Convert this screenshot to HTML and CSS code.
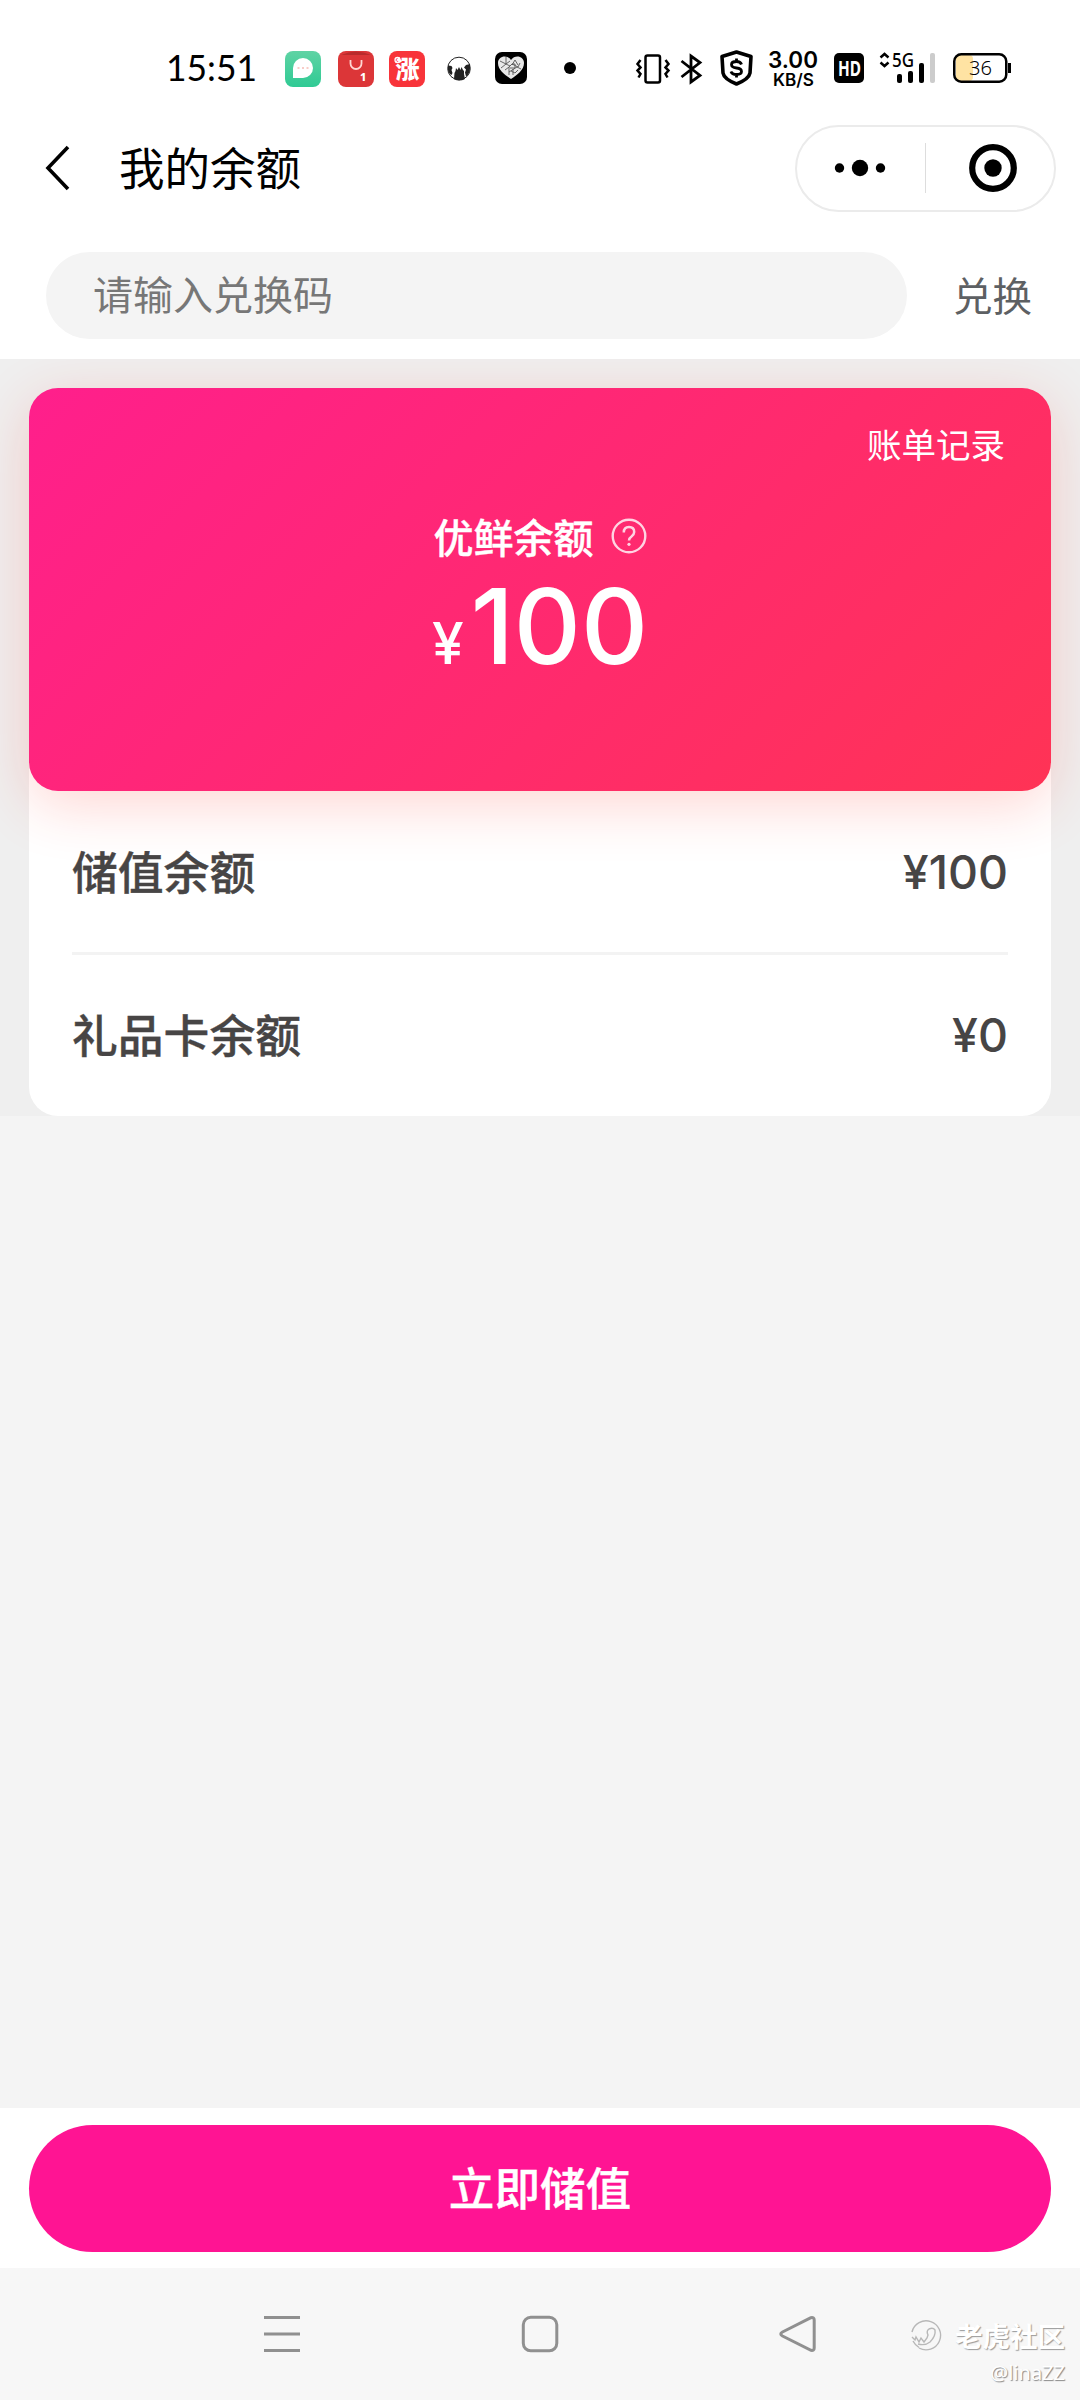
FILE: index.html
```html
<!DOCTYPE html>
<html lang="zh-CN">
<head>
<meta charset="utf-8">
<title>我的余额</title>
<link rel="stylesheet" href="styles.css">
</head>
<body>
<div class="screen">
  <header class="status">
    <svg class="time" width="92" height="46"><text x="0" y="36" textLength="91" lengthAdjust="spacingAndGlyphs">15:51</text></svg>
    <svg class="app app-chat" width="36" height="36" viewBox="0 0 36 36">
      <defs><linearGradient id="mint" x2="0" y2="1"><stop stop-color="#5fd3a4"/><stop offset="1" stop-color="#2fca94"/></linearGradient></defs>
      <rect width="36" height="36" rx="8" fill="url(#mint)"/>
      <path d="M8 27V17a10 10 0 1 1 10 10Z" fill="#fff"/>
      <path d="M12.500 17h2M17 17h2M21.500 17h2" stroke="#f6bcb5" stroke-width="1.500"/>
    </svg>
    <svg class="app app-shop" width="36" height="36" viewBox="0 0 36 36">
      <rect width="36" height="36" rx="8" fill="#dc3638"/>
      <path d="M3 4Q18-3 33 4Z" fill="#b92b2c"/>
      <path d="M12.500 9v3.500a5.500 5.500 0 0 0 11 0V9" fill="none" stroke="#ffd7d3" stroke-width="1.800"/>
      <text x="22" y="30" class="tiny-num">1</text>
    </svg>
    <svg class="app app-rise" width="36" height="36" viewBox="0 0 36 36">
      <rect width="36" height="36" rx="8" fill="#f8343a"/>
      <text x="6.500" y="27" class="rise-char">涨</text>
      <circle cx="8.500" cy="9" r="2.500" fill="none" stroke="#fff" stroke-width="1.300"/>
      <path d="M6.500 11.500l4-5" stroke="#fff"/>
    </svg>
    <svg class="app-globe" width="24" height="25" viewBox="0 0 24 25">
      <circle cx="12" cy="12.500" r="11.300" fill="#fff" stroke="#222" stroke-width="1"/>
      <path d="M1 9.500l3.500.5 1 2-1 2 1 3-1 2Q2 18 1 14ZM23 8l-4 1-2 2.500 2 2-1 3 1 4q4-3 4-8ZM7 23l.5-6 1-2 .5-3 1.500 2 1.500-3 1.500 3 1-3 1.500 3 1 1v3l1 5Q12 26 7 23Z" fill="#222"/>
    </svg>
    <svg class="app-heart" width="32" height="32" viewBox="0 0 32 32">
      <rect width="32" height="32" rx="7" fill="#000"/>
      <path d="M16 27C10 23 3 18 3 11C3 4 12 2 16 8C20 2 29 4 29 11C29 18 22 23 16 27Z" fill="#e8e8e8"/>
      <path d="M5 9l6 3-5 4m5-11v7l4 2m0-5l-4 3m-1 6l4-3v8m0-8l3-3h3v4h-5m3 1v6m-4-3l8-5 4 2m-9-4l3-5 3 5m-6-1l6 3 2-4m-9 8l4 2 3-3" fill="none" stroke="#555" stroke-width=".9"/>
    </svg>
    <span class="notice-dot"></span>
    <svg class="vibrate" width="34" height="32" viewBox="0 0 34 32">
      <rect x="9.500" y="2.500" width="14.500" height="27" rx="2" fill="none" stroke="#000" stroke-width="2.500"/>
      <path d="M4.500 7L1.500 11l3 3.500-3 3 3 3.500-2 3.500M29.500 7l3 4-3 3.500 3 3-3 3.500 2 3.500" fill="none" stroke="#000" stroke-width="2.500"/>
    </svg>
    <svg class="bluetooth" width="23" height="32" viewBox="0 0 23 32">
      <path d="M1.500 8L20 22.500l-9 6.500V3l9 6.500L1.500 24" fill="none" stroke="#000" stroke-width="2.800"/>
    </svg>
    <svg class="shield" width="33" height="36" viewBox="0 0 33 36">
      <path d="M16.500 2L31 6.500 30 23q-1 6-13.500 11Q4 29 3 23L2 6.500Z" fill="none" stroke="#000" stroke-width="3.600" stroke-linejoin="round"/>
      <path d="M21.500 14.500q-1-3-5-3-5 0-5 3t5 3.500q5 .5 5 3.500t-5 3q-4.500 0-5.500-3M16.500 8.500v3M16.500 24.500v3" fill="none" stroke="#000" stroke-width="2.800"/>
    </svg>
    <svg class="speed" width="54" height="48"><text x="1" y="24" textLength="50" lengthAdjust="spacingAndGlyphs" class="speed-num">3.00</text><text x="6" y="42" textLength="41" lengthAdjust="spacingAndGlyphs" class="speed-unit">KB/S</text></svg>
    <svg class="hd" width="30" height="30"><rect width="30" height="30" rx="5"/><text x="4" y="22.500" textLength="23" lengthAdjust="spacingAndGlyphs">HD</text></svg>
    <svg class="signal" width="58" height="34" viewBox="0 0 58 34">
      <path d="M1.500 6.500L5.500 3l4 3.500M1.500 11.500l4 3.500 4-3.500" fill="none" stroke="#000" stroke-width="2.500"/>
      <text x="13" y="16" textLength="22" lengthAdjust="spacingAndGlyphs">5G</text>
      <rect x="18" y="23" width="5" height="9" rx="2"/><rect x="29" y="20" width="5" height="12" rx="2"/><rect x="40" y="12" width="5" height="20" rx="2"/><rect x="51" y="2" width="5" height="30" rx="2" fill="#ccc"/>
    </svg>
    <svg class="battery" width="59" height="32" viewBox="0 0 59 32">
      <rect x="3" y="3" width="17" height="26" rx="4" fill="#ffe3a3"/>
      <rect x="1.250" y="2.250" width="52" height="27.500" rx="7" fill="none" stroke="#000" stroke-width="2.500"/>
      <path d="M56.500 11v10" stroke="#000" stroke-width="3"/>
      <text x="16" y="23" textLength="23" lengthAdjust="spacingAndGlyphs">36</text>
    </svg>
  </header>

  <nav class="titlebar">
    <svg class="back" width="26" height="48" viewBox="0 0 26 48"><path d="M24 3L4 24 24 45" fill="none" stroke="#000" stroke-width="3.600"/></svg>
    <h1 class="title">我的余额</h1>
    <div class="capsule">
      <svg class="dots" width="52" height="18" viewBox="0 0 52 18"><circle cx="5.500" cy="9" r="4.700"/><circle cx="26" cy="9" r="8.200"/><circle cx="46.500" cy="9" r="4.700"/></svg>
      <span class="capsule-line"></span>
      <svg class="target" width="48" height="48" viewBox="0 0 48 48"><circle cx="24" cy="24" r="20.800" fill="none" stroke="#000" stroke-width="6.200"/><circle cx="24" cy="24" r="8.700"/></svg>
    </div>
  </nav>

  <section class="redeem">
    <div class="field">请输入兑换码</div>
    <span class="redeem-action">兑换</span>
  </section>

  <main class="wallet">
    <section class="card">
      <a class="records">账单记录</a>
      <div class="card-label">优鲜余额
        <svg width="36" height="36" viewBox="0 0 36 36"><circle cx="18" cy="18" r="16.300" fill="none" stroke="#fff" stroke-width="2.400"/><path d="M12.800 14.500q0-5.500 5.200-5.500t5.200 5q0 2.500-2.700 4.500-2.500 1.700-2.500 4" fill="none" stroke="#fff" stroke-width="2.500"/><circle cx="18" cy="26.300" r="1.600" fill="#fff"/></svg>
      </div>
      <div class="amount"><span class="currency">¥</span><span class="value">100</span></div>
    </section>
    <section class="list">
      <div class="row"><span class="name">储值余额</span><span class="num">¥100</span></div>
      <div class="row"><span class="name">礼品卡余额</span><span class="num">¥0</span></div>
    </section>
  </main>

  <div class="action"><button class="topup">立即储值</button></div>

  <footer class="system">
    <svg class="key" width="38" height="38" viewBox="0 0 38 38"><path d="M1 2.500h36M1 19h36M1 35.500h36"/></svg>
    <svg class="key" width="38" height="38" viewBox="0 0 38 38"><rect x="2.300" y="2.300" width="33.500" height="33.500" rx="7.500"/></svg>
    <svg class="key" width="38" height="38" viewBox="0 0 38 38"><path d="M32 2.700L3.500 17q-3.500 2 0 4L32 35.300q3.200.5 3.200-2.300V5q0-2.800-3.200-2.300Z"/></svg>
    <div class="watermark">
      <div class="brand">
        <svg width="32" height="32" viewBox="0 0 32 32"><g fill="none" stroke="#b8b8b8" stroke-width="1.400"><path d="M2 13A14.500 14.500 0 1 1 9 29M3 22q2 4 6 6.500"/><path d="M2 18l3 3 1-3 3 5 2-4 3 4 3-4 1-3q-2-4 1-6 4-2 6 1 1 6-5 12-5 4-12 2"/></g></svg>
        <span>老虎社区</span>
      </div>
      <div class="author">@linaZZ</div>
    </div>
  </footer>
</div>
</body>
</html>
```
FILE: styles.css
```css
* { box-sizing: border-box; }
body { margin: 0; background: #f4f4f4; font-family: "Noto Sans CJK SC", sans-serif; }
svg { display: block; flex: none; overflow: visible; }
.screen { width: 1080px; height: 2400px; display: flex; flex-direction: column; overflow: hidden; }

.status { flex: none; height: 118px; padding: 36px 0 18px 166px; display: flex; align-items: center; background: #fff; }
.status text { font-family: "Noto Sans", sans-serif; }
.time { margin-top: -1px; }
.status .time text { font-family: Lato, sans-serif; font-size: 37px; }
.app { margin-top: 1px; }
.app-chat { margin-left: 27px; }
.app-shop { margin-left: 17px; }
.app-rise { margin-left: 15px; }
.status .tiny-num { font-size: 11px; font-weight: 800; fill: #fff; }
.status .rise-char { font-family: "Noto Sans CJK SC", sans-serif; font-size: 24px; font-weight: 900; fill: #fff; }
.app-globe { margin-left: 22px; }
.app-heart { margin-left: 24px; }
.notice-dot { flex: none; width: 12px; height: 12px; margin-left: 37px; border-radius: 50%; background: #000; }
.vibrate { margin: 2px 0 0 60px; }
.bluetooth { margin: 1px 0 0 10px; }
.shield { margin-left: 17px; }
.speed { margin-left: 14px; }
.status .speed-num { font-family: Inter, sans-serif; font-size: 23px; font-weight: 600; }
.status .speed-unit { font-family: Inter, sans-serif; font-size: 17px; font-weight: 600; }
.hd { margin-left: 13px; }
.hd text { font-size: 21px; font-weight: 700; fill: #fff; }
.signal { margin-left: 15px; }
.signal text { font-size: 20px; font-weight: 500; }
.battery { margin-left: 16px; }
.battery text { font-size: 20px; font-weight: 300; }

.titlebar { flex: none; height: 100px; padding: 0 24px 0 44px; display: flex; align-items: center; background: #fff; }
.title { margin: -4px auto 0 49px; font-size: 45.500px; line-height: 66px; font-weight: 400; color: #000; }
.capsule { width: 261px; height: 87px; padding-left: 37px; display: flex; align-items: center; border: 2px solid #ebebeb; border-radius: 44px; }
.capsule-line { width: 1px; height: 50px; margin-left: 39px; background: #ddd; }
.target { margin-left: 43px; }

.redeem { flex: none; height: 141px; padding: 34px 48px 20px 46px; display: flex; align-items: center; justify-content: space-between; background: #fff; color: #5d6063; font-size: 39.500px; }
.field { width: 861px; height: 87px; padding-left: 47px; border-radius: 44px; background: #f4f4f4; color: #777; font-size: 40px; line-height: 83px; }
.redeem-action { line-height: 84px; padding-bottom: 4px; }

.wallet { flex: none; height: 757px; padding: 29px 29px 0; overflow: hidden; background: #efefef; }
.card { position: relative; height: 403px; padding: 30px 46px 0; border-radius: 29px; background: linear-gradient(135deg, #ff1f8c, #ff3355); box-shadow: 0 14px 58px rgba(255, 51, 34, .2); color: #fff; }
.records { display: block; text-align: right; font-size: 34.500px; line-height: 50px; }
.card-label { display: flex; justify-content: center; align-items: center; gap: 17px; margin-top: 38px; height: 60px; font-size: 40px; font-weight: 500; -webkit-text-stroke: .4px #fff; }
.card-label svg { opacity: .8; margin-top: 0; }
.amount { display: flex; justify-content: center; align-items: baseline; margin-top: 4px; font-family: Inter, sans-serif; font-weight: 500; line-height: 112px; }
.currency { font-size: 57px; margin-right: 7px; }
.value { font-size: 104px; }
.list { height: 354px; margin-top: -29px; padding: 29px 43px 0; border-radius: 0 0 29px 29px; background: #fff; }
.row { height: 161px; display: flex; align-items: center; justify-content: space-between; font-size: 45.800px; font-weight: 500; color: #474545; }
.row + .row { height: 164px; border-top: 3px solid #f3f3f3; }
.name { padding-bottom: 4px; -webkit-text-stroke: .4px #474545; }
.num { font-family: Inter, sans-serif; font-size: 46.500px; }
.row + .row > span { margin-top: -1px; }

.action { flex: none; height: 160px; margin-top: auto; padding: 17px 29px; background: #fff; }
.topup { display: block; width: 100%; height: 127px; padding: 0 0 5px; border: 0; border-radius: 64px; background: #ff1493; color: #fff; font: 500 45.600px "Noto Sans CJK SC", sans-serif; -webkit-text-stroke: .4px #fff; }

.system { flex: none; height: 132px; padding-left: 263px; display: flex; align-items: center; gap: 220px; background: #f7f7f7; }
.key { fill: none; stroke: #909090; stroke-width: 3; }
.watermark { margin: 40px 22px 0 -127px; flex: none; width: 159px; display: flex; flex-direction: column; align-items: flex-end; color: #fff; white-space: nowrap; }
.system .watermark { margin-left: -131px; }
.brand { display: flex; align-items: center; gap: 13px; font-size: 27.500px; line-height: 38px; font-weight: 700; text-shadow: 1px 1px 1px #999; }
.author { font: 20px/38px "Noto Sans", sans-serif; text-shadow: 1px 1px 1px #888; }
```
